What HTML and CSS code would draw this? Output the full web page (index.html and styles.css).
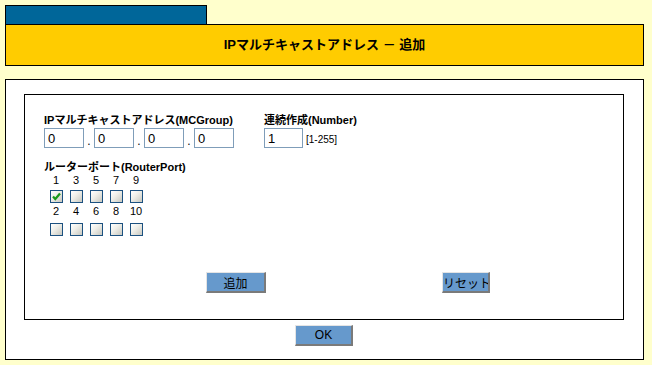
FILE: index.html
```html
<html>
<head>
<meta charset="utf-8">
<title>IPマルチキャストアドレス - 追加</title>
<link rel="stylesheet" href="styles.css">
</head>
<body>
<div id="page">
    <div class="tab"></div>
    <div class="title">IPマルチキャストアドレス － 追加</div>
    <div class="panel">
        <form class="box">
            <div class="fields">
                <div class="group groupIp">
                    <div class="label">IPマルチキャストアドレス(MCGroup)</div>
                    <div class="row">
                        <input class="txt" value="0"><span class="dot">.</span><input class="txt" value="0"><span class="dot">.</span><input class="txt" value="0"><span class="dot">.</span><input class="txt" value="0">
                    </div>
                </div>
                <div class="group">
                    <div class="label">連続作成(Number)</div>
                    <div class="row">
                        <input class="txt num" value="1"><span class="range">[1-255]</span>
                    </div>
                </div>
            </div>
            <div class="label portLabel">ルーターポート(RouterPort)</div>
            <div class="ports">
                <span class="n">1</span><span class="n">3</span><span class="n">5</span><span class="n">7</span><span class="n">9</span>
                <span class="cb on"><svg width="11" height="11" viewBox="0 0 11 11"><path d="M2 5.5 L4.3 8 L9 2.5" fill="none" stroke="#1a9a1a" stroke-width="2.2"/></svg></span>
                <span class="cb"></span><span class="cb"></span><span class="cb"></span><span class="cb"></span>
                <span class="n n2">2</span><span class="n n2">4</span><span class="n n2">6</span><span class="n n2">8</span><span class="n n2">10</span>
                <span class="cb cb2"></span><span class="cb cb2"></span><span class="cb cb2"></span><span class="cb cb2"></span><span class="cb cb2"></span>
            </div>
            <div class="actions">
                <input type="button" class="btn add" value="追加">
                <input type="button" class="btn reset" value="リセット">
            </div>
        </form>
        <div class="okRow">
            <input type="button" class="btn ok" value="OK">
        </div>
    </div>
</div>
</body>
</html>
```

FILE: styles.css
```css
*{box-sizing:border-box;}
body{margin:0;padding:5px;background:#ffffcc;color:#000;font-family:"Liberation Sans","Noto Sans CJK JP",sans-serif;font-size:12px;}
form{margin:0;}
#page{width:639px;}
.tab{width:202px;height:19px;background:#006699;border:1px solid #000;border-bottom:none;}
.title{height:42px;background:#ffcc00;border:1px solid #000;font-size:13px;font-weight:bold;line-height:40px;text-align:center;}
.panel{margin-top:13px;height:281px;background:#fff;border:1px solid #000;padding:14px 19px 0 18px;}
.box{height:226px;border:1px solid #000;padding:18px 0 0 19px;}
.fields{display:flex;}
.group{display:flex;flex-direction:column;}
.groupIp{width:220px;}
.label{font-weight:bold;font-size:11px;line-height:15px;height:15px;white-space:nowrap;}
.row{display:flex;align-items:flex-end;height:20px;}
.txt{width:40px;height:20px;border:1px solid #7f9db9;padding:0 0 0 3px;margin:0;font:13px/18px "Liberation Sans",sans-serif;color:#000;background:#fff;}
.num{width:39px;}
.dot{width:10px;text-align:center;font-size:12px;line-height:14px;}
.range{font-size:10px;margin-left:3px;line-height:16px;}
.portLabel{margin-top:12px;}
.ports{display:grid;grid-template-columns:repeat(5,20px);justify-items:center;margin-left:2px;}
.n{font-size:11px;line-height:11px;height:11px;}
.cb{width:13px;height:13px;border:1px solid #1c5180;background:linear-gradient(135deg,#ffffff 0%,#f0f0ea 40%,#c8c8c0 100%);margin:4px 0 3px;display:flex;align-items:center;justify-content:center;}
.cb2{margin:6px 0 0;}
.actions{display:flex;margin-top:36px;padding-left:162px;}
.btn{height:21px;margin:0;padding:0;background:#6699cc;border-style:solid;border-width:1px 2px 2px 1px;border-color:#e4e4e4 #7a7a7a #7a7a7a #e4e4e4;font:12px "Liberation Sans","Noto Sans CJK JP",sans-serif;color:#000;}
.add{width:60px;}
.reset{width:48px;margin-left:176px;}
.okRow{display:flex;justify-content:center;margin-top:5px;}
.ok{width:58px;}
```
